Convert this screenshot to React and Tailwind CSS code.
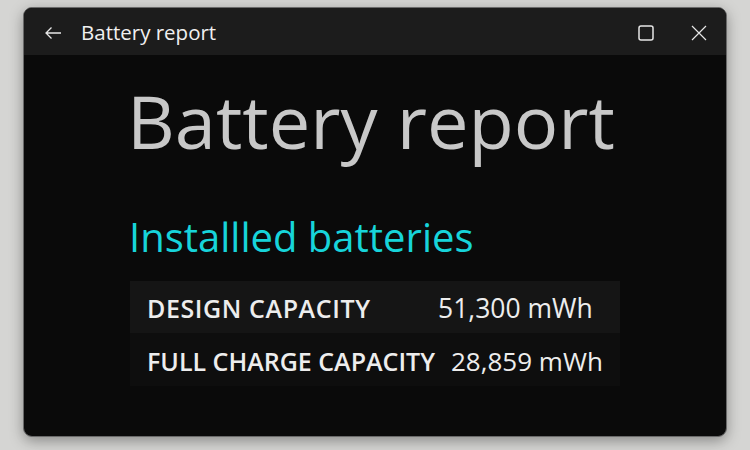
export default function App() {
  return (
    <div className="w-[750px] h-[450px] bg-[#d5d5d3] pt-[7px] pl-[23px]" style={{ fontFamily: '"Open Sans", "Noto Sans", sans-serif' }}>
      <div className="w-[704px] h-[430px] rounded-[9px] overflow-hidden bg-[#0a0a0a] border border-[#6a6a6a] shadow-[0_4px_14px_rgba(0,0,0,0.35)] flex flex-col">
        <div className="h-[47px] bg-[#1c1c1c] flex items-center shrink-0 pt-[2px]">
          <svg className="ml-[20px]" width="18" height="14" viewBox="0 0 18 14" fill="none" stroke="#e6e6e6" strokeWidth="1.3">
            <path d="M17 7H2M7.5 1.5 2 7l5.5 5.5" />
          </svg>
          <span className="ml-[19px] text-[20.5px] text-[#f0f0f0] leading-none">Battery report</span>
          <div className="flex-1" />
          <svg width="16" height="16" viewBox="0 0 16 16" fill="none" stroke="#e6e6e6" strokeWidth="1.5">
            <rect x="1" y="1" width="14" height="14" rx="2" />
          </svg>
          <svg className="ml-[37px] mr-[19px]" width="16" height="16" viewBox="0 0 16 16" fill="none" stroke="#e6e6e6" strokeWidth="1.2">
            <path d="M1 1l14 14M15 1 1 15" />
          </svg>
        </div>
        <div className="pl-[103px] flex flex-col">
          <div className="mt-[29px] text-[74px] leading-none font-normal text-[#c8c8c8] tracking-[0px]">Battery report</div>
          <div className="mt-[59px] ml-[2px] text-[40px] leading-none text-[#17d4da]">Installled batteries</div>
          <div className="mt-[24px] w-[490px] ml-[3px] flex flex-col text-[25px] text-[#ededed]">
            <div className="h-[52px] bg-[#151515] flex items-center pl-[17px] pt-[4px]">
              <span className="w-[291px] font-semibold tracking-[0.6px]">DESIGN CAPACITY</span>
              <span className="text-[26.5px]">51,300 mWh</span>
            </div>
            <div className="h-[53px] bg-[#0e0e0e] flex items-center pl-[17px] pt-[4px]">
              <span className="w-[304px] font-semibold">FULL CHARGE CAPACITY</span>
              <span className="text-[26px]">28,859 mWh</span>
            </div>
          </div>
        </div>
      </div>
    </div>
  );
}
